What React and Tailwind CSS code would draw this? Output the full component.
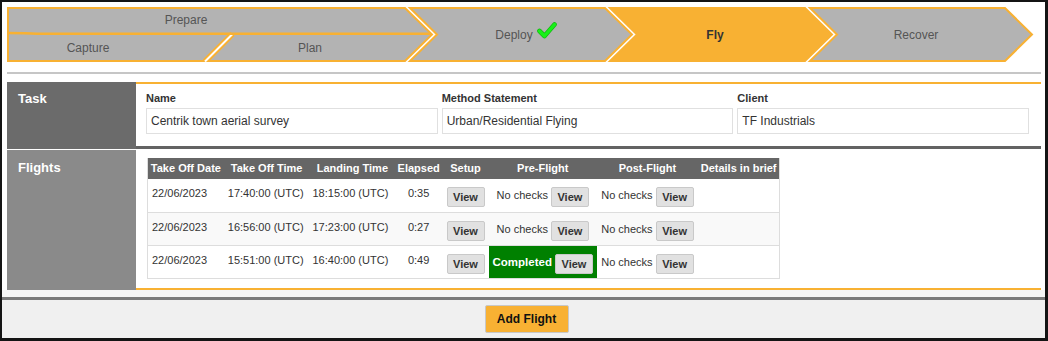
import React from "react";

const ORANGE = "#f8b133";
const GRAY = "#b3b3b3";

function ChevronDrawing() {
  const shape = (pts, fill) => (
    <polygon points={pts} fill={fill} stroke={ORANGE} strokeWidth="2" strokeLinejoin="miter" />
  );
  return (
    <svg className="absolute inset-0" width="1030" height="55" viewBox="0 0 1030 55">
      {shape("1,1 398,1 425,27.5 398,54 1,54", GRAY)}
      <line x1="198" y1="54.5" x2="225.5" y2="27" stroke={ORANGE} strokeWidth="6" />
      <line x1="198" y1="54.5" x2="225.5" y2="27" stroke="#fff" strokeWidth="2" />
      <path d="M1 26 Q 20 26 30 26.8 L 424 26.8" fill="none" stroke={ORANGE} strokeWidth="2.6" />
      {shape("403,1 598,1 625,27.5 598,54 403,54 430,27.5", GRAY)}
      {shape("603,1 798,1 825,27.5 798,54 603,54 630,27.5", ORANGE)}
      {shape("803,1 998,1 1025,27.5 998,54 803,54 830,27.5", GRAY)}
    </svg>
  );
}

function Breadcrumb() {
  return (
    <div className="relative w-[1030px] h-[55px] flex text-[12px] text-[#555]">
      <ChevronDrawing />
      <div className="relative w-[398px] flex flex-col">
        <div className="h-[26px] flex items-center justify-center pr-[40px]">Prepare</div>
        <div className="h-[29px] flex">
          <div className="w-[198px] flex items-center justify-center pr-[36px]">Capture</div>
          <div className="w-[200px] flex items-center justify-center pl-[10px]">Plan</div>
        </div>
      </div>
      <div className="relative w-[200px] flex items-center justify-center pl-[42px]">
        <span>Deploy</span>
        <svg className="ml-[4px] mb-[8px]" width="20" height="17" viewBox="0 0 20 17">
          <path d="M2.5 9 L7.5 14 L17.5 2.5" fill="none" stroke="#12b512" strokeWidth="4.6" strokeLinecap="round" strokeLinejoin="round" />
          <path d="M2.5 9 L7.5 14 L17.5 2.5" fill="none" stroke="#19f019" strokeWidth="3.4" strokeLinecap="round" strokeLinejoin="round" />
        </svg>
      </div>
      <div className="relative w-[200px] flex items-center justify-center pl-[20px] font-bold text-[#333]">Fly</div>
      <div className="relative w-[200px] flex items-center justify-center pl-[22px]">Recover</div>
    </div>
  );
}

function Field({ label, value }) {
  return (
    <div className="flex flex-col">
      <div className="h-[13px] leading-[13px] text-[11px] font-bold text-[#333]">{label}</div>
      <div className="mt-[3px] h-[26px] border border-[#e0e0e0] flex items-center pl-[4px] text-[12px] text-[#333]">
        {value}
      </div>
    </div>
  );
}

function ViewBtn() {
  return (
    <span className="inline-flex items-center justify-center w-[38px] h-[20px] bg-[#e1e1e1] border border-[#c9c9c9] rounded-[2px] text-[11px] font-bold text-[#333]">
      View
    </span>
  );
}

const cols = [
  { t: "Take Off Date", w: "w-[76px]" },
  { t: "Take Off Time", w: "w-[86px]" },
  { t: "Landing Time", w: "w-[86px]" },
  { t: "Elapsed", w: "w-[47px]" },
  { t: "Setup", w: "w-[47px]" },
  { t: "Pre-Flight", w: "w-[108px]" },
  { t: "Post-Flight", w: "w-[102px]" },
  { t: "Details in brief", w: "w-[81px]" },
];

const rows = [
  { d: "22/06/2023", to: "17:40:00 (UTC)", l: "18:15:00 (UTC)", e: "0:35", done: false, bg: "bg-white" },
  { d: "22/06/2023", to: "16:56:00 (UTC)", l: "17:23:00 (UTC)", e: "0:27", done: false, bg: "bg-[#f9f9f9]" },
  { d: "22/06/2023", to: "15:51:00 (UTC)", l: "16:40:00 (UTC)", e: "0:49", done: true, bg: "bg-white" },
];

function FlightsTable() {
  return (
    <div className="w-[633px] border-x border-b border-[#dddddd] text-[11px] text-[#333]">
      <div className="flex h-[21px] bg-[#666666] text-white font-bold">
        {cols.map((c) => (
          <div key={c.t} className={`${c.w} flex items-center justify-center whitespace-nowrap`}>
            {c.t}
          </div>
        ))}
      </div>
      {rows.map((r, i) => (
        <div key={i} className={`flex h-[33px] ${r.bg} ${i > 0 ? "border-t border-[#dddddd]" : ""}`}>
          <div className="w-[76px] pl-[4px] pt-[6px] whitespace-nowrap">{r.d}</div>
          <div className="w-[86px] pl-[4px] pt-[6px] whitespace-nowrap">{r.to}</div>
          <div className="w-[86px] pl-[3px] pt-[6px] whitespace-nowrap">{r.l}</div>
          <div className="w-[47px] pt-[6px] text-center">{r.e}</div>
          <div className="w-[47px] pt-[8px] flex justify-center">
            <ViewBtn />
          </div>
          {r.done ? (
            <div className="w-[108px] bg-[#008000] flex justify-center items-start gap-[3px] pt-[8px]">
              <span className="text-white font-bold text-[11.5px]">Completed</span>
              <ViewBtn />
            </div>
          ) : (
            <div className="w-[108px] flex justify-center items-start gap-[3px] pt-[8px]">
              <span>No checks</span>
              <ViewBtn />
            </div>
          )}
          <div className="w-[102px] flex justify-center items-start gap-[3px] pt-[8px]">
            <span>No checks</span>
            <ViewBtn />
          </div>
          <div className="w-[81px]" />
        </div>
      ))}
    </div>
  );
}

export default function App() {
  return (
    <div className="w-[1048px] h-[341px] border-2 border-r-[3px] border-b-[3px] border-[#141414] bg-white flex flex-col font-['Liberation_Sans',Arial,sans-serif] overflow-hidden">
      <div className="h-[288px] pl-[5px] pr-[4px] pt-[5px]">
        <Breadcrumb />
        <div className="mt-[10px] h-[2px] bg-[#c6c6c6]" />
        <div className="mt-[8px] flex h-[67px]">
          <div className="w-[129px] bg-[#6b6b6b] text-white font-bold text-[13px] pl-[11px] pt-[7px]">Task</div>
          <div className="flex-1 border-t-2 border-b-[3px] border-t-[#f8b133] border-b-[#636363] pl-[10px] pr-[12px] pt-[8px]">
            <div className="grid grid-cols-3 gap-x-[4px]">
              <Field label="Name" value="Centrik town aerial survey" />
              <Field label="Method Statement" value="Urban/Residential Flying" />
              <Field label="Client" value="TF Industrials" />
            </div>
          </div>
        </div>
        <div className="mt-[1px] flex h-[140px]">
          <div className="w-[129px] bg-[#8a8a8a] text-white font-bold text-[13px] pl-[11px] pt-[8px]">Flights</div>
          <div className="flex-1 border-b-2 border-[#f8b133] pl-[11px] pt-[8px]">
            <FlightsTable />
          </div>
        </div>
      </div>
      <div className="h-[7px] bg-[#f5f5f5]" />
      <div className="flex-1 border-t-[3px] border-[#7a7a7a] bg-[#f0f0f0] flex justify-center pt-[5px] pl-[6px]">
        <button className="w-[84px] h-[28px] bg-[#f8b133] border border-[#c8c8c8] rounded-[2px] text-[12px] font-bold text-[#111]">
          Add Flight
        </button>
      </div>
    </div>
  );
}
